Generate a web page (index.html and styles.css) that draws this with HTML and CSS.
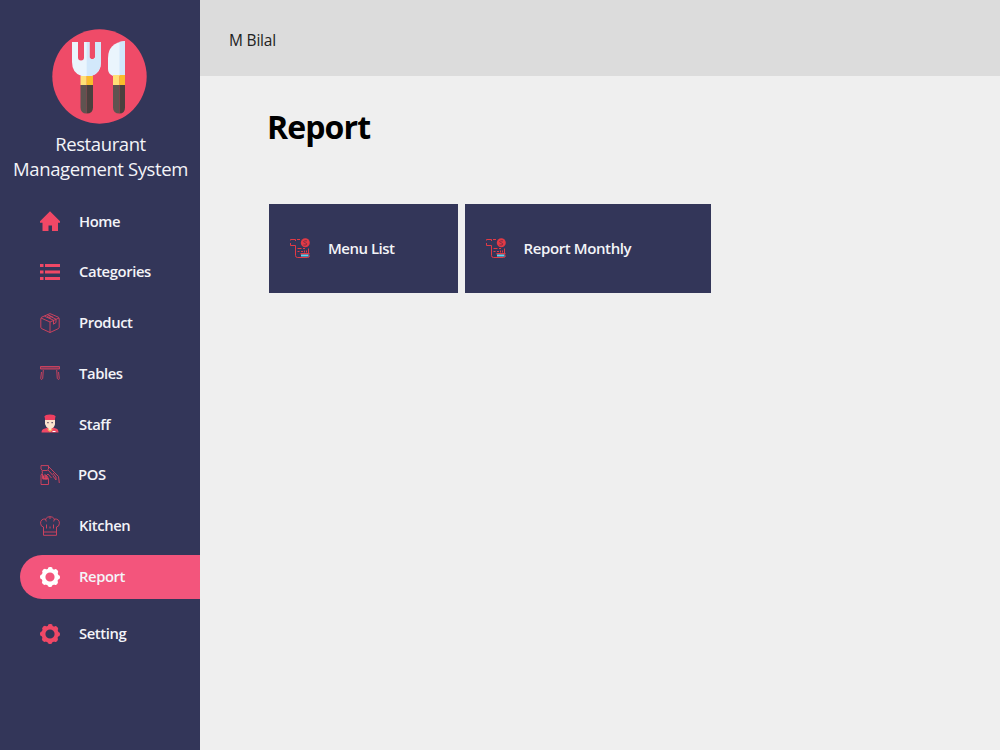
FILE: index.html
```html
<!DOCTYPE html>
<html lang="en">
<head>
  <meta charset="UTF-8" />
  <meta name="viewport" content="width=device-width, initial-scale=1.0"/>
  <title>Restaurant Management System</title>
  <link rel="stylesheet" href="styles.css">
</head>
<body>
  <svg class="sprite" width="0" height="0">
    <symbol id="icon-gear" viewBox="0 0 20 20">
      <circle cx="10" cy="10" r="6.600" fill="none" stroke="currentColor" stroke-width="4"/>
      <circle cx="10" cy="10" r="8" fill="none" stroke="currentColor" stroke-width="4" stroke-linecap="round" stroke-dasharray=".9 5.383" stroke-dashoffset=".45"/>
    </symbol>
    <symbol id="icon-bill" viewBox="0 0 20 20">
      <g fill="none" stroke="currentColor" stroke-width="1">
        <path d="M.5 2.500V1.500h5M.5 5v2.500h5M7 1.500h3M5.500 1.500v1.500M5.500 7.500v10q0 2 2 2h10q2 0 2-2"/>
        <path d="M7.500 10.500h4M13 10.500h2M7.500 13.500h2M11 13.500h2M14.500 12.500v2M16.500 12.500v2M18.500 10.500v5"/>
      </g>
      <circle cx="15.300" cy="4.800" r="4.500" fill="currentColor"/>
      <path d="M17 2.800h-2.500l-1 1 3.200 1.700-.5 1.500h-2.800" fill="none" stroke="#6a2c48" stroke-width=".8"/>
      <path d="M10.500 15h9v1.500h-9z" fill="currentColor"/>
      <path d="M11 16.500h7.500v2H11z" fill="#5ed3f0"/>
    </symbol>
  </svg>

  <div class="app">
    <aside class="sidebar">
      <svg class="logo" viewBox="0 0 95 95">
        <circle cx="47.500" cy="47.500" r="47.200" fill="#ef4b68"/>
        <path d="M20 13h6v15.500a3 3 0 0 0 6 0V13h5.500v15.500a3 3 0 0 0 5.500 0V13h6v20q0 11-9.500 14h-10Q20 44 20 33z" fill="#eaf5fd"/>
        <path d="M34.700 13h2.800v15.500a3 3 0 0 0 5.500 0V13h6v20q0 11-9.500 14h-4.800z" fill="#d2e8fb"/>
        <path d="M73 12v35H61q-5-2-5-7V29q0-15 17-17z" fill="#eaf5fd"/>
        <path d="M67.500 12.800L73 12v35h-5.500z" fill="#d2e8fb"/>
        <path d="M28.500 47h6.200v9h-6.200zM61 46h6.500v10H61z" fill="#ffe077"/>
        <path d="M34.700 47H41v9h-6.300zM67.500 46H73v10h-5.500z" fill="#f9bd2c"/>
        <path d="M28.500 56h6.200v28.500q-6.200 0-6.200-6zM61 56h6.500v28.500q-6.500 0-6.500-6z" fill="#5f5350"/>
        <path d="M34.700 56H41v22.500q0 6-6.300 6zM67.500 56H73v22.500q0 6-5.500 6z" fill="#4b403e"/>
      </svg>
      <div class="brand">
        <div class="brand-top">Restaurant</div>
        <div class="brand-bottom">Management System</div>
      </div>

      <nav class="menu">
        <a class="menu-item">
          <svg class="icon" viewBox="0 0 20 20"><path d="M10 .3l10 10v1.500h-2V20h-6v-5.500H8.500V20H2.500v-8.200H0v-1.500z" fill="currentColor"/></svg>
          <span>Home</span>
        </a>
        <a class="menu-item">
          <svg class="icon" viewBox="0 0 20 20"><path d="M0 2h3.500v3H0zM5 2h15v3H5zM0 8.500h3.500v3H0zM5 8.500h15v3H5zM0 15h3.500v3H0zM5 15h15v3H5z" fill="currentColor"/></svg>
          <span>Categories</span>
        </a>
        <a class="menu-item">
          <svg class="icon thin" viewBox="0 0 20 20"><path d="M10 .6l8.200 3.500q1 .5 1 1.600v8.500q0 1-1 1.500L10 19.500l-8.200-3.800q-1-.5-1-1.500V5.700q0-1.100 1-1.600zM1 5l9 4 9-4M10 9v10.500M4.500 3.200l9 4v4l2.500-1.700V6.200L7.500 1.800M7 3.500l4 1.800M9 2.500l4 1.800"/></svg>
          <span>Product</span>
        </a>
        <a class="menu-item">
          <svg class="icon thin" viewBox="0 0 20 20"><path d="M.5 3.500h19v2.500H.5zM1 5h18M1.500 9l-.8 6.500q.2 2 2 0L3.300 7M18.500 9l.8 6.500q-.2 2-2 0L16.700 7"/></svg>
          <span>Tables</span>
        </a>
        <a class="menu-item">
          <svg class="icon" viewBox="0 0 20 20">
            <path d="M1.500 18.500q0-3.500 3.500-4l3-1h5l3 1q2.500.5 2.500 4z" fill="#f04866"/>
            <path d="M5 5.500h10v4.800q-1 3.700-3.500 4.200v1.500L10 17.200l-1.500-1.200v-1.500Q6 13.500 5 10z" fill="#fbe3cd"/>
            <path d="M4.500 2.500Q5 .5 10 .5t5.500 2l-.7 3.500H5.300z" fill="#ef3f60"/>
            <path d="M7.300 8h1.300v1.300H7.300zM11.500 8h1.300v1.300h-1.300z" fill="#55415a"/>
            <path d="M8 14.500l2 2 2-2 .5 1.500-2.500 2-2.500-2z" fill="#f2b85b"/>
            <path d="M12.500 17h3v1h-3z" fill="#fff"/>
          </svg>
          <span>Staff</span>
        </a>
        <a class="menu-item">
          <svg class="icon thin" viewBox="0 0 20 20"><path d="M1 .6h7.500v3.500L7 5.500H2.500L1 4zM1 19.500V10l1.500-2L2 5.500M1 19.500h7.500M2.500 9v4.500M5 9v6M7 11v4M2.500 13.500h6l-2-3 1.500-1.500 3.500 4M8.500 1.500l6.500 6.500 3.500 3.500.8 6.500M8 5l5 5.500M13 8l3 4v3l-3-4M8.500 14v5.500"/><path d="M3.500 10.500v4M6 10v4.500" stroke-width="1.500"/></svg>
          <span class="label-pos">POS</span>
        </a>
        <a class="menu-item">
          <svg class="icon thin" viewBox="0 0 20 20"><path d="M3.500 19.300V11Q.6 10.500.6 7.200q0-4.500 5-4.200Q7.200.6 10 .6T14.400 3q5-.3 5 4.200 0 3.300-2.900 3.800v8.300zM3.500 16h13M5.500 3l.8 2.500M14.500 3l-.8 2.500M10 1v2M6.500 8.500v4M10 10.500v2M13.500 8.500v4"/></svg>
          <span>Kitchen</span>
        </a>
        <a class="menu-item active">
          <svg class="icon"><use href="#icon-gear"/></svg>
          <span>Report</span>
        </a>
        <a class="menu-item">
          <svg class="icon"><use href="#icon-gear"/></svg>
          <span>Setting</span>
        </a>
      </nav>
    </aside>

    <main class="content">
      <header class="topbar">M Bilal</header>
      <h1>Report</h1>
      <div class="cards">
        <button class="card card-menu">
          <svg class="icon"><use href="#icon-bill"/></svg>
          <span>Menu List</span>
        </button>
        <button class="card card-monthly">
          <svg class="icon"><use href="#icon-bill"/></svg>
          <span>Report Monthly</span>
        </button>
      </div>
    </main>
  </div>
</body>
</html>
```
FILE: styles.css
```css
* {
  box-sizing: border-box;
  font-family: "Segoe UI", "Open Sans", "Noto Sans", sans-serif;
}

body {
  margin: 0;
  background: #efefef;
}

.sprite {
  display: none;
}

.app {
  display: flex;
  height: 750px;
}

.sidebar {
  width: 200px;
  flex-shrink: 0;
  background: #333659;
  color: #f3f4f8;
  padding-top: 29px;
}

.logo {
  display: block;
  width: 95px;
  height: 95px;
  margin-left: 52px;
}

.brand {
  margin-top: 7px;
  padding-left: 1px;
  text-align: center;
  font-size: 18.5px;
  letter-spacing: -0.4px;
  line-height: 25px;
  white-space: nowrap;
}

.menu {
  margin-top: 18px;
}

.menu-item {
  display: flex;
  align-items: center;
  height: 44px;
  margin: 0 0 6.8px 20px;
  padding-left: 20px;
  font-size: 14.8px;
  font-weight: 600;
  letter-spacing: -0.4px;
}

.menu-item span {
  padding-bottom: 1px;
}

.menu-item .label-pos {
  margin-left: -1px;
}

.icon {
  width: 20px;
  height: 20px;
  margin-right: 19px;
  flex-shrink: 0;
  color: #f04866;
}

.thin {
  fill: none;
  stroke: #d9435f;
  stroke-width: 0.9;
}

.menu-item.active {
  margin-bottom: 13px;
  background: #f3557c;
  border-radius: 22px 0 0 22px;
}

.active .icon {
  color: #fff;
}

.content {
  flex: 1;
}

.topbar {
  height: 76px;
  padding: 30px 29px;
  background: #dcdcdc;
  color: #222;
  font-size: 15.5px;
  letter-spacing: -0.2px;
  line-height: 21px;
}

h1 {
  margin: 29px 0 0 67px;
  font-size: 32px;
  letter-spacing: -0.9px;
  line-height: 44px;
  font-weight: 700;
  color: #000;
}

.cards {
  display: flex;
  gap: 7px;
  margin: 55px 0 0 69px;
}

.card {
  display: flex;
  align-items: center;
  height: 89px;
  padding: 0 0 1px 21px;
  border: none;
  background: #333659;
  color: #f3f4f8;
  font-size: 15px;
  font-weight: 600;
  letter-spacing: -0.4px;
}

.card .icon {
  color: #e23a45;
  margin-right: 18px;
}

.card-menu {
  width: 188.6px;
  letter-spacing: -0.5px;
}

.card-monthly {
  width: 246.6px;
}
```
